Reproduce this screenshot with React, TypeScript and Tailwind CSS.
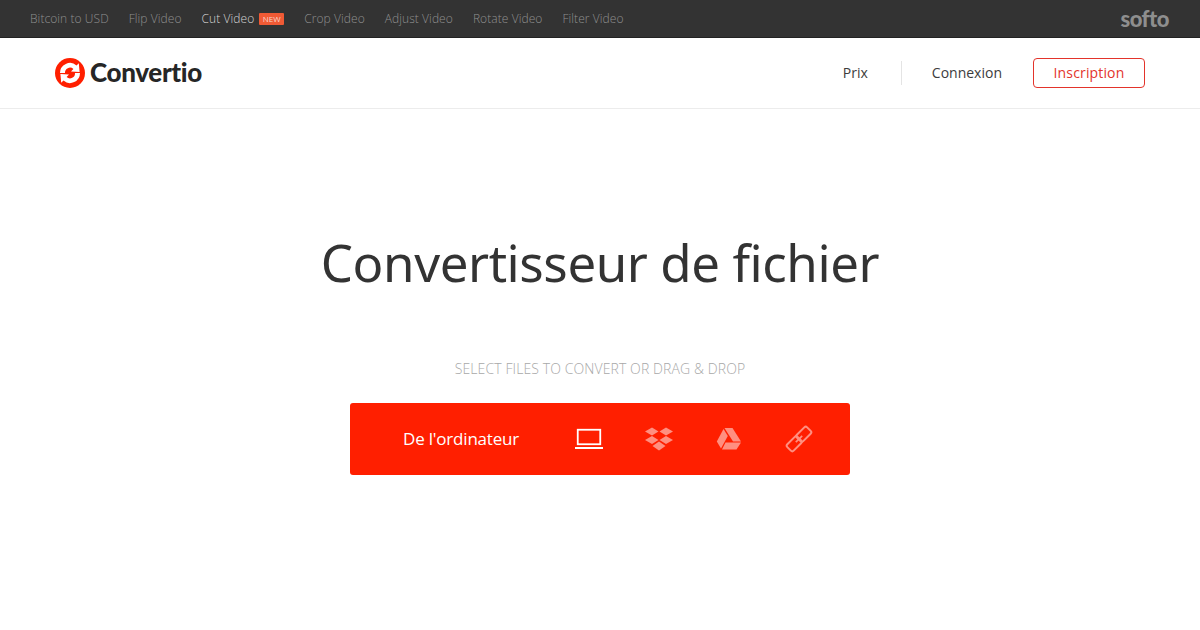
const font = "font-['Open_Sans','Noto_Sans',sans-serif]";

const topLinks = ['Bitcoin to USD', 'Flip Video'];
const topLinks2 = ['Crop Video', 'Adjust Video', 'Rotate Video', 'Filter Video'];

function Logo() {
  return (
    <svg width="30" height="30" viewBox="0 0 30 30" className="shrink-0">
      <circle cx="15" cy="15" r="15" fill="#ff1f00" />
      <path d="M5 15 A10 10 0 0 1 21.5 7.4 L23.8 5.2 L24.6 14 L16 13.4 L18.4 11 A5 5 0 0 0 10 15 Z" fill="#fff" />
      <path d="M25 15 A10 10 0 0 1 8.5 22.6 L6.2 24.8 L5.4 16 L14 16.6 L11.6 19 A5 5 0 0 0 20 15 Z" fill="#fff" />
    </svg>
  );
}

function Laptop() {
  return (
    <svg width="28" height="24" viewBox="0 0 28 24">
      <rect x="2.75" y="2.75" width="22.5" height="14.5" fill="none" stroke="#fff" strokeWidth="1.8" />
      <rect x="0" y="20" width="28" height="2" fill="#fff" />
    </svg>
  );
}

function Dropbox() {
  return (
    <svg width="28" height="24" viewBox="0 0 28 24" fill="#ff8f80">
      <path d="M7 0.5 L13.5 4.5 L7 8.5 L0 4.5 Z" />
      <path d="M21 0.5 L28 4.5 L21 8.5 L14.5 4.5 Z" />
      <path d="M7 9 L13.5 13 L7 17 L0 13 Z" />
      <path d="M21 9 L28 13 L21 17 L14.5 13 Z" />
      <path d="M14 14.5 L20.5 19 L14 23.5 L7.5 19 Z" />
    </svg>
  );
}

function Drive() {
  return (
    <svg width="26" height="24" viewBox="0 0 26 24" fill="#ff8f80">
      <path d="M8.5 1 L16.5 1 L25 14.5 L17 14.5 Z" />
      <path d="M7.5 2 L11.8 9 L5 21.5 L0.8 14.5 Z" />
      <path d="M9.5 15.5 L25 15.5 L20.5 22.5 L6 22.5 Z" />
    </svg>
  );
}

function LinkIcon() {
  return (
    <svg width="28" height="28" viewBox="0 0 28 28" fill="none" stroke="#ff8f80" strokeWidth="2">
      <g transform="rotate(-45 14 14)">
        <rect x="0" y="9.5" width="14.5" height="9" rx="2" />
        <rect x="13.5" y="9.5" width="14.5" height="9" rx="2" />
        <path d="M9.5 14 H18.5" strokeWidth="1.7" />
      </g>
    </svg>
  );
}

export default function App() {
  return (
    <div className={`w-[1200px] h-[630px] overflow-hidden bg-white flex flex-col ${font}`}>
      <div className="h-[38px] shrink-0 bg-[#333333] border-b border-[#222222] flex items-center pl-[30px] pr-[31px] text-[12px] font-light tracking-[0.07px] text-[#8f8f8f]">
        <div className="flex items-center gap-[20px]">
          {topLinks.map((t) => (
            <span key={t}>{t}</span>
          ))}
          <span className="flex items-center gap-[5px] text-[#d4d4d4]">
            Cut Video
            <span className="bg-[#f05a35] text-[#f8d5ca] text-[8px] font-normal leading-[12px] w-[25px] text-center rounded-[1px]">NEW</span>
          </span>
          {topLinks2.map((t) => (
            <span key={t}>{t}</span>
          ))}
        </div>
        <span className="ml-auto font-['Lato',sans-serif] font-black text-[22px] tracking-[-0.5px] text-[#8e8e8e] leading-none">softo</span>
      </div>

      <header className="h-[71px] shrink-0 border-b border-[#ececec] flex items-center pl-[55px] pr-[55px]">
        <Logo />
        <span className="ml-[5px] -mt-[2px] font-['Lato',sans-serif] font-black text-[26px] tracking-[-0.35px] text-[#262626] leading-none">Convertio</span>
        <nav className="ml-auto flex items-center text-[14px] -mt-[1px] text-[#3c3c3c]">
          <span>Prix</span>
          <span className="w-px h-6 bg-[#e4e4e4] ml-[33px] mr-[30px]" />
          <span>Connexion</span>
          <span className="ml-[31px] w-[112px] h-[30px] border border-[#e3342b] rounded-[4px] flex items-center justify-center text-[#e3342b] tracking-[0.15px]">Inscription</span>
        </nav>
      </header>

      <main className="flex flex-col items-center">
        <h1 className="mt-[117px] text-[51px] leading-[72px] font-normal tracking-[-0.42px] text-[#333333] font-['Noto_Sans',sans-serif]">Convertisseur de fichier</h1>
        <p className="mt-[61px] text-[14px] font-light tracking-[0.1px] leading-[20px] text-[#a8a8a8]">SELECT FILES TO CONVERT OR DRAG &amp; DROP</p>
        <div className="mt-[24px] w-[500px] h-[72px] bg-[#ff1f00] rounded-[3px] flex items-center pl-[53px]">
          <span className="text-[17px] text-white w-[172px] tracking-[-0.2px]">De l'ordinateur</span>
          <div className="flex items-center gap-[42px]">
            <Laptop />
            <Dropbox />
            <span className="ml-[1px]"><Drive /></span>
            <span className="ml-[1px]"><LinkIcon /></span>
          </div>
        </div>
      </main>
    </div>
  );
}
